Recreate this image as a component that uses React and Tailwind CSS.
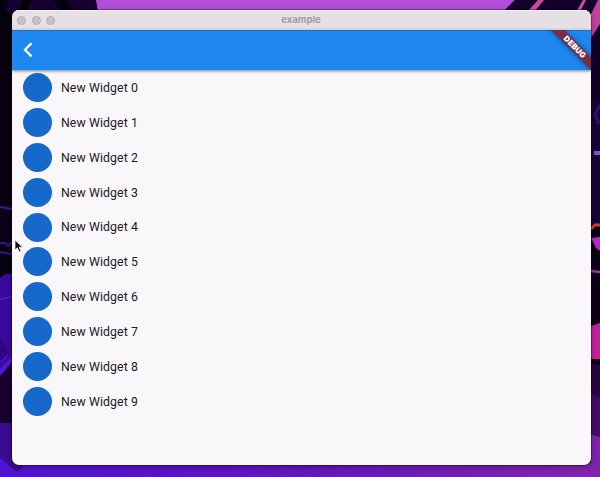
const rows = Array.from({ length: 10 }, (_, i) => `New Widget ${i}`);

function Wallpaper() {
  return (
    <svg className="absolute inset-0 h-full w-full" viewBox="0 0 600 477" aria-hidden="true">
      <defs>
        <linearGradient id="floor" x1="0" x2="1">
          <stop offset="0" stopColor="#5213d2" />
          <stop offset="0.5" stopColor="#6116bc" />
          <stop offset="1" stopColor="#8424ad" />
        </linearGradient>
      </defs>
      <rect width="600" height="477" fill="#07020f" />
      <path d="M0 0H96L98 12H0Z" fill="#160130" />
      <path d="M0 0H8L2 30H0ZM22 0H32L26 12H18ZM54 0H66L72 12H60Z" fill="#05000d" />
      <path d="M96 0H515L503 12H98Z" fill="#b14dd8" />
      <path d="M515 0H600V100H590V12H503Z" fill="#12002a" />
      <path d="M538 0H544L534 12H527ZM583 0H586L580 12H576Z" fill="#d14aa0" />
      <path d="M598 0H600V24L591 38V14Z" fill="#c240a0" />
      <path d="M0 40L12 80V200H0Z" fill="#08010f" />
      <path d="M0 207L12 209" stroke="#4910a8" strokeWidth="2" />
      <path d="M0 210L12 212V240H0Z" fill="#0b0118" />
      <path d="M0 243H5L8 246L12 242M0 252L12 254" stroke="#3d0d96" strokeWidth="2" fill="none" />
      <path d="M0 278L5 274H12V360L0 374Z" fill="#38099c" />
      <path d="M0 299L12 297M0 338L6 350V357L0 362" stroke="#4f14d2" strokeWidth="2" fill="none" />
      <path d="M0 336L7 349V355L0 362Z" fill="#2d0780" />
      <path d="M12 357V364L0 378V369Z" fill="#5017dc" />
      <path d="M0 376L12 362V424H0Z" fill="#18002e" />
      <path d="M0 423H12V463H600V477H0Z" fill="url(#floor)" />
      <path d="M0 423H12V463L24 467L17 472L0 458Z" fill="#3b0b91" />
      <path d="M591 100H600V225H591Z" fill="#160435" />
      <path d="M600 105L595 114L599 124" stroke="#32106b" strokeWidth="3" fill="none" />
      <path d="M594 151H600V155H594Z" fill="#904ad0" />
      <path d="M591 229L595 225L600 225" stroke="#db3b2b" strokeWidth="3" fill="none" />
      <path d="M591 238L600 237V251L596 248Z" fill="#b725c9" />
      <path d="M591 250L600 254V360H591Z" fill="#0b0018" />
      <path d="M591 271L600 272" stroke="#a42bbd" strokeWidth="2.5" />
      <path d="M591 326L600 323V359H591Z" fill="#c7209c" />
      <path d="M591 359H600V366L591 363Z" fill="#100016" />
      <path d="M591 363L600 365V399L591 394Z" fill="#290641" />
      <path d="M591 394L600 398V437L591 434Z" fill="#420c67" />
      <path d="M591 434L600 437V477H582V463H591Z" fill="#8123af" />
    </svg>
  );
}

function TitleBar() {
  return (
    <div className="flex h-5 shrink-0 items-center bg-[#e5e0e5] shadow-[inset_0_1px_0_#f5f2f6]">
      <div className="flex w-[100px] gap-[5.5px] pl-[5px]">
        {[0, 1, 2].map((i) => (
          <span key={i} className="size-[9px] rounded-full border border-[#b3b0b3] bg-[#c6c3c6]" />
        ))}
      </div>
      <span className="flex-1 pr-[101px] text-center font-['Inter','Liberation_Sans',sans-serif] text-[9.5px] leading-none font-bold text-[#a19da2]">
        example
      </span>
    </div>
  );
}

function AppBar() {
  return (
    <div className="relative z-10 h-10 shrink-0 shadow-[0_1px_3px_rgba(0,0,0,0.5)]">
      <div className="flex h-full items-center overflow-hidden border-t border-[#1972cc] bg-[#1e88f0] pb-px pl-[10.5px]">
        <svg className="h-4 w-[10px]" viewBox="0 0 10 16" fill="none" aria-hidden="true">
          <path d="M8.5 1.2L2 7.8L8.5 14.4" stroke="white" strokeWidth="2.3" />
        </svg>
        <div className="absolute inset-0 overflow-hidden">
          <div className="absolute top-[11.5px] right-[-18px] flex h-[9px] w-[70px] rotate-45 items-center justify-center bg-[#7b2b45] shadow-[0_0_5px_rgba(0,0,0,0.55)]">
            <span className="pl-[2px] font-['Inter','Liberation_Sans',sans-serif] text-[7.8px] leading-none font-black tracking-[0.02em] text-white">
              DEBUG
            </span>
          </div>
        </div>
      </div>
    </div>
  );
}

function Cursor() {
  return (
    <svg className="absolute top-[239px] left-[14px] z-20 h-[15px] w-[10px]" viewBox="0 0 10 15" aria-hidden="true">
      <path d="M1 1V11L3.4 8.8L5.2 13L7 12.2L5.2 8.2H8.5Z" fill="#101010" stroke="white" strokeWidth="0.7" />
    </svg>
  );
}

export default function App() {
  return (
    <div className="relative h-[477px] w-[600px] overflow-hidden bg-[#07020f] pt-[10px] pl-3">
      <Wallpaper />
      <main className="relative flex h-[454.5px] w-[579px] flex-col overflow-hidden rounded-[7px] bg-[#f9f7fa] shadow-[0_0_0_0.5px_rgba(0,0,0,0.6),0_2px_6px_rgba(0,0,0,0.3)]">
        <TitleBar />
        <AppBar />
        <ul className="flex flex-col pt-[0.3px]">
          {rows.map((label) => (
            <li key={label} className="flex h-[34.83px] items-center gap-[9px] pl-[11px]">
              <span className="size-[29px] shrink-0 rounded-full bg-[#1668cb]" />
              <span className="pt-px font-['Roboto','Liberation_Sans',sans-serif] text-[12.3px] leading-none tracking-[0.008em] whitespace-nowrap text-[#202022]">
                {label}
              </span>
            </li>
          ))}
        </ul>
      </main>
      <Cursor />
    </div>
  );
}
